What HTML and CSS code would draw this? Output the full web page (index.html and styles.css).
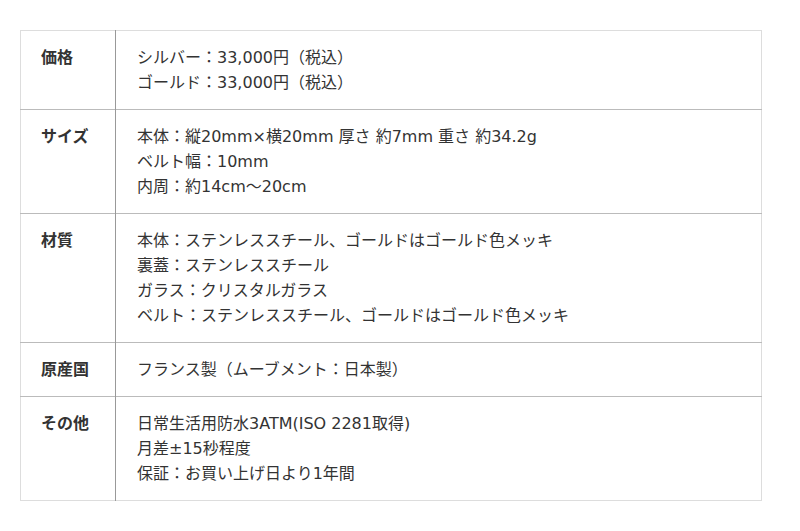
FILE: index.html
```html
<!DOCTYPE html>
<html lang="ja">
<head>
<meta charset="utf-8">
<link rel="stylesheet" href="styles.css">
</head>
<body>
<table class="spec">
  <tr>
    <th>価格</th>
    <td>シルバー：33,000円（税込）<br>ゴールド：33,000円（税込）</td>
  </tr>
  <tr>
    <th>サイズ</th>
    <td>本体：縦20mm×横20mm 厚さ 約7mm 重さ 約34.2g<br>ベルト幅：10mm<br>内周：約14cm～20cm</td>
  </tr>
  <tr>
    <th>材質</th>
    <td>本体：ステンレススチール、ゴールドはゴールド色メッキ<br>裏蓋：ステンレススチール<br>ガラス：クリスタルガラス<br>ベルト：ステンレススチール、ゴールドはゴールド色メッキ</td>
  </tr>
  <tr>
    <th>原産国</th>
    <td>フランス製（ムーブメント：日本製）</td>
  </tr>
  <tr>
    <th>その他</th>
    <td>日常生活用防水3ATM(ISO 2281取得)<br>月差±15秒程度<br>保証：お買い上げ日より1年間</td>
  </tr>
</table>
</body>
</html>
```
FILE: styles.css
```css
html, body {
  margin: 0;
  padding: 0;
  background: #fff;
}
body {
  padding: 30px 38px 0 20px;
  font-family: "DejaVu Sans", "Noto Sans CJK JP", sans-serif;
  font-size: 16px;
  color: #333;
}
.spec {
  width: 742px;
  border-collapse: collapse;
  border: 1px solid #ddd;
}
.spec tr + tr th,
.spec tr + tr td {
  border-top: 1px solid #bbb;
}
.spec th {
  width: 54px;
  padding: 14px 20px;
  text-align: left;
  vertical-align: top;
  font-weight: bold;
  line-height: 25px;
  border-right: 1px solid #999;
}
.spec td {
  padding: 14px 21px;
  vertical-align: top;
  line-height: 25px;
}
```
